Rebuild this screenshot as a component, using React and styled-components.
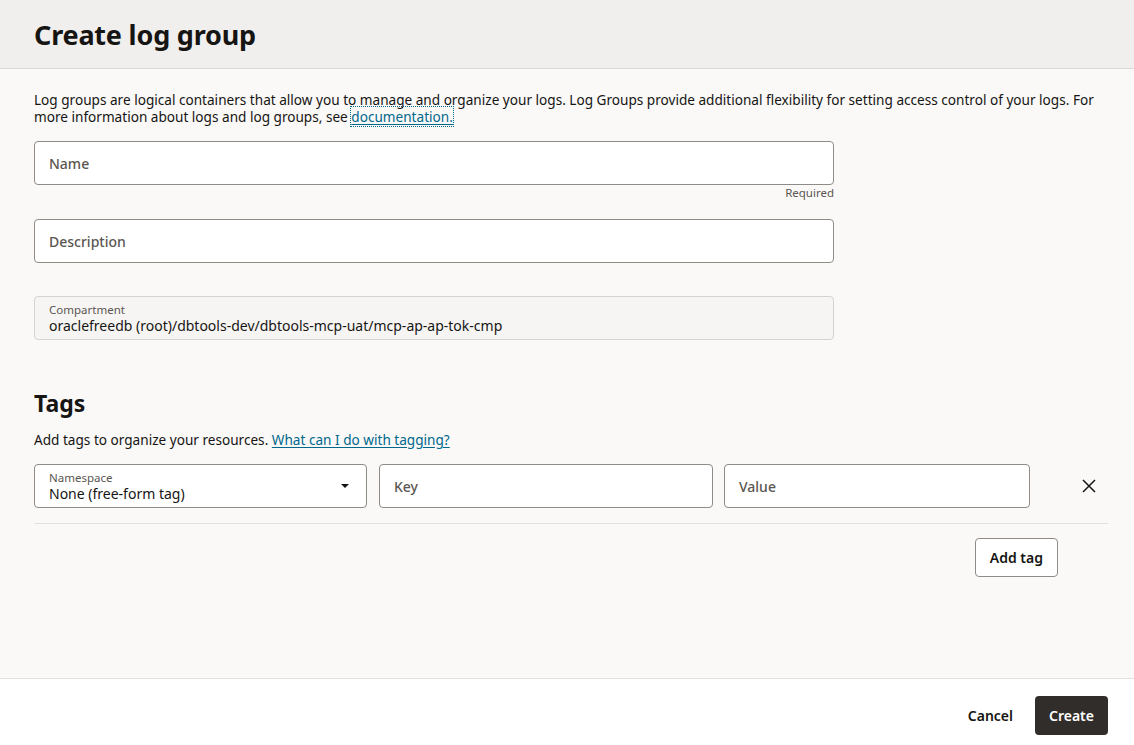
import React from "react";
import styled, { createGlobalStyle } from "styled-components";

const GlobalStyle = createGlobalStyle`
  html, body {
    margin: 0;
    padding: 0;
    height: 100%;
  }
  body {
    font-family: "Noto Sans", "Open Sans", sans-serif;
    color: #161513;
    background: #faf9f8;
  }
  #root {
    height: 100%;
  }
`;

const Page = styled.div`
  height: 745px;
  display: flex;
  flex-direction: column;
  background: #faf9f8;
`;

const Header = styled.header`
  height: 69px;
  flex-shrink: 0;
  box-sizing: border-box;
  background: #f1efed;
  border-bottom: 1px solid #dcdad7;
  display: flex;
  align-items: center;
  padding: 0 34px;
`;

const Title = styled.h1`
  margin: 0;
  font-size: 27px;
  font-weight: 700;
  letter-spacing: -0.2px;
`;

const Body = styled.main`
  flex: 1;
  padding: 22px 26px 0 34px;
`;

const Intro = styled.p`
  margin: 0 0 16px;
  max-width: 1066px;
  font-size: 13.6px;
  line-height: 17px;
`;

const Link = styled.a`
  color: #00688c;
  text-decoration: underline;
  text-underline-offset: 2px;
  outline: ${(p) => (p.$focused ? "1px dotted #00688c" : "none")};
  cursor: pointer;
`;

const Field = styled.div`
  width: 800px;
  margin-bottom: ${(p) => p.$gap || 0}px;
`;

const InputBox = styled.div`
  box-sizing: border-box;
  height: 44px;
  flex-shrink: 0;
  width: ${(p) => (p.$width ? `${p.$width}px` : "100%")};
  border: 1px solid ${(p) => (p.$readonly ? "#d6d3cf" : "#8f8b86")};
  border-radius: 4px;
  background: ${(p) => (p.$readonly ? "#f6f5f4" : "#ffffff")};
  display: flex;
  align-items: center;
  padding: 0 14px;
`;

const Placeholder = styled.span`
  font-size: 14px;
  color: #5b5652;
  font-weight: 500;
`;

const Stacked = styled.div`
  display: flex;
  flex-direction: column;
  line-height: 16px;
  flex: 1;
`;

const SmallLabel = styled.span`
  font-size: 11.5px;
  color: #5b5652;
`;

const Value = styled.span`
  font-size: 14px;
  color: #161513;
`;

const Helper = styled.div`
  text-align: right;
  font-size: 11.5px;
  color: #5b5652;
  margin: 0 0 4px;
  line-height: 15px;
`;

const SectionTitle = styled.h2`
  margin: 0 0 12px;
  font-size: 23px;
  font-weight: 700;
`;

const SectionText = styled.p`
  margin: 0 0 16px;
  font-size: 13.6px;
  line-height: 17px;
`;

const TagRow = styled.div`
  display: flex;
  align-items: center;
  padding-bottom: 15px;
  border-bottom: 1px solid #e4e1dd;
`;

const Spacer = styled.div`
  width: ${(p) => p.$w}px;
  flex-shrink: 0;
`;

const Caret = styled.span`
  width: 0;
  height: 0;
  border-left: 4px solid transparent;
  border-right: 4px solid transparent;
  border-top: 4px solid #161513;
  margin-right: 3px;
`;

const IconButton = styled.button`
  border: none;
  background: none;
  width: 36px;
  height: 36px;
  flex-shrink: 0;
  display: flex;
  align-items: center;
  justify-content: center;
  padding: 0;
  cursor: pointer;
`;

const ActionRow = styled.div`
  display: flex;
  justify-content: flex-end;
  padding-right: 50px;
  margin-top: 14px;
`;

const OutlineButton = styled.button`
  box-sizing: border-box;
  height: 39px;
  padding: 0 14px;
  border: 1px solid #8f8b86;
  border-radius: 4px;
  background: #ffffff;
  font-family: inherit;
  font-size: 14px;
  font-weight: 600;
  color: #161513;
`;

const Footer = styled.footer`
  height: 67px;
  flex-shrink: 0;
  box-sizing: border-box;
  background: #ffffff;
  border-top: 1px solid #e4e1dd;
  display: flex;
  align-items: flex-start;
  justify-content: flex-end;
  gap: 8px;
  padding: 17px 26px 0 0;
`;

const FooterButton = styled.button`
  box-sizing: border-box;
  height: 39px;
  padding: 0 14px;
  border: none;
  border-radius: 4px;
  font-family: inherit;
  font-size: 14px;
  font-weight: 600;
  background: ${(p) => (p.$primary ? "#312d2a" : "transparent")};
  color: ${(p) => (p.$primary ? "#ffffff" : "#161513")};
`;

export default function App() {
  return (
    <>
      <GlobalStyle />
      <Page>
        <Header>
          <Title>Create log group</Title>
        </Header>
        <Body>
          <Intro>
            Log groups are logical containers that allow you to manage and
            organize your logs. Log Groups provide additional flexibility for
            setting access control of your logs. For more information about
            logs and log groups, see <Link $focused>documentation.</Link>
          </Intro>

          <Field $gap={19}>
            <InputBox>
              <Placeholder>Name</Placeholder>
            </InputBox>
            <Helper>Required</Helper>
          </Field>

          <Field $gap={33}>
            <InputBox>
              <Placeholder>Description</Placeholder>
            </InputBox>
          </Field>

          <Field $gap={47}>
            <InputBox $readonly>
              <Stacked>
                <SmallLabel>Compartment</SmallLabel>
                <Value>
                  oraclefreedb (root)/dbtools-dev/dbtools-mcp-uat/mcp-ap-ap-tok-cmp
                </Value>
              </Stacked>
            </InputBox>
          </Field>

          <SectionTitle>Tags</SectionTitle>
          <SectionText>
            Add tags to organize your resources.{" "}
            <Link>What can I do with tagging?</Link>
          </SectionText>

          <TagRow>
            <InputBox $width={333}>
              <Stacked>
                <SmallLabel>Namespace</SmallLabel>
                <Value>None (free-form tag)</Value>
              </Stacked>
              <Caret />
            </InputBox>
            <Spacer $w={12} />
            <InputBox $width={334}>
              <Placeholder>Key</Placeholder>
            </InputBox>
            <Spacer $w={11} />
            <InputBox $width={306}>
              <Placeholder>Value</Placeholder>
            </InputBox>
            <Spacer $w={41} />
            <IconButton aria-label="Remove tag">
              <svg width="14" height="14" viewBox="0 0 14 14">
                <path
                  d="M1 1 L13 13 M13 1 L1 13"
                  stroke="#161513"
                  strokeWidth="1.5"
                  fill="none"
                />
              </svg>
            </IconButton>
          </TagRow>

          <ActionRow>
            <OutlineButton>Add tag</OutlineButton>
          </ActionRow>
        </Body>
        <Footer>
          <FooterButton>Cancel</FooterButton>
          <FooterButton $primary>Create</FooterButton>
        </Footer>
      </Page>
    </>
  );
}
